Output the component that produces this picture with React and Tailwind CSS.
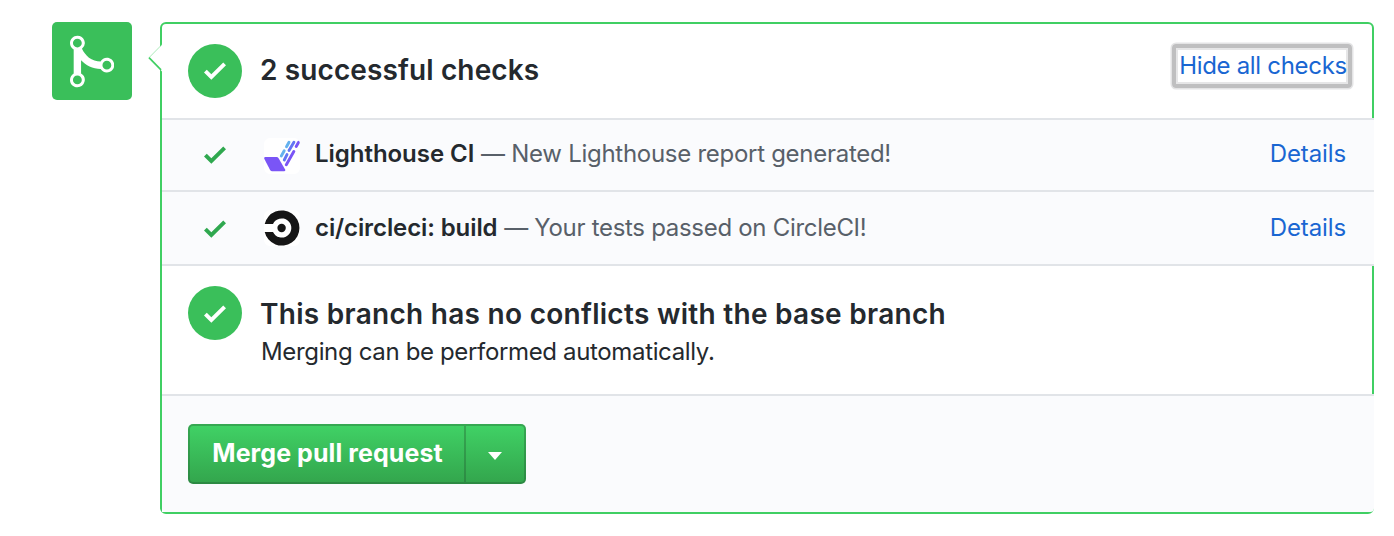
function CheckIcon({ className }) {
  return (
    <svg viewBox="0 0 12 16" className={`h-[29.33px] w-[22px] shrink-0 fill-current ${className}`}>
      <path d="M12 5l-8 8-4-4 1.5-1.5L4 10l6.5-6.5L12 5z" />
    </svg>
  );
}

function StatusCircle({ iconClass }) {
  return (
    <div className="flex size-[54px] shrink-0 items-center justify-center rounded-full bg-[#3abf5a] text-white">
      <CheckIcon className={iconClass} />
    </div>
  );
}

function MergeIcon() {
  return (
    <svg viewBox="0 0 12 16" className="h-[59px] w-[44.25px] fill-white">
      <path d="M10 7c-.73 0-1.38.41-1.73 1.02V8C7.22 7.98 6 7.64 5.14 6.98c-.75-.58-1.5-1.61-1.89-2.44A1.993 1.993 0 0 0 2 .99C.89.99 0 1.89 0 3a2 2 0 0 0 1 1.72v6.56c-.59.35-1 .99-1 1.72 0 1.11.89 2 2 2a1.993 1.993 0 0 0 1-3.72V7.67c.67.7 1.44 1.27 2.3 1.69.86.42 2.03.63 2.97.64v-.02c.36.61 1 1.02 1.73 1.02 1.11 0 2-.89 2-2 0-1.11-.89-2-2-2zm-6.8 6c0 .66-.55 1.2-1.2 1.2-.65 0-1.2-.55-1.2-1.2 0-.65.55-1.2 1.2-1.2.65 0 1.2.55 1.2 1.2zM2 4.2C1.34 4.2.8 3.65.8 3c0-.65.55-1.2 1.2-1.2.65 0 1.2.55 1.2 1.2 0 .65-.55 1.2-1.2 1.2zm8 6c-.66 0-1.2-.55-1.2-1.2 0-.65.55-1.2 1.2-1.2.65 0 1.2.55 1.2 1.2 0 .65-.55 1.2-1.2 1.2z" />
    </svg>
  );
}

function LighthouseLogo() {
  return (
    <svg viewBox="0 0 36 36" className="size-9 shrink-0 rounded-md bg-white">
      <path d="M1.5 19H12.5q1.4 0 2.1 1.2L21 31.2q1 2-1 2H8.2q-1.4 0-2.1-1.2L.4 21Q-.4 19 1.5 19z" fill="#7a55f6" />
      <g strokeWidth="2.9" strokeLinecap="round" fill="none">
        <path d="M25 4.3L22.5 8.8M20.2 12.8L17.3 18" stroke="#64b1ee" />
        <path d="M29.9 4.3L25 12.5M23 16.6L20.3 22" stroke="#6375f3" />
        <path d="M34.6 4.3L32.2 8.5M29.8 13.5L22.3 26.8" stroke="#7a55f6" />
      </g>
    </svg>
  );
}

function CircleLogo() {
  return (
    <svg viewBox="0 0 36 36" className="size-9 shrink-0 rounded-md bg-white">
      <path d="M.7 14A17.6 17.6 0 1 1 .7 22H9A9.6 9.6 0 1 0 9 14z" fill="#161616" />
      <circle cx="17.6" cy="18" r="4.2" fill="#161616" />
    </svg>
  );
}

function CheckRow({ logo, name, message, className }) {
  return (
    <div className={`-mr-0.5 flex items-center border-t-2 border-[#e1e4e8] bg-[#fafbfd] pr-7 pl-[42px] ${className}`}>
      <CheckIcon className="text-[#2fa84f]" />
      <div className="ml-[38px] flex">{logo}</div>
      <p className="-mt-[3px] ml-[15px] flex-1 whitespace-nowrap text-[24px] leading-9 text-[#586069]">
        {name} {message}
      </p>
      <a className="-mt-[3px] text-[24px] leading-9 tracking-[-0.12px] text-[#1966d2]">Details</a>
    </div>
  );
}

export default function App() {
  return (
    <main className="flex h-[536px] items-start bg-white pt-[22px] pr-5 pl-[52px] font-['Inter',sans-serif] text-[#24292e]">
      <div className="flex h-[78px] w-20 shrink-0 items-center justify-center rounded-[5px] bg-[#3abf5a]">
        <MergeIcon />
      </div>

      <section className="relative ml-7 flex h-[492px] flex-1 flex-col rounded-md border-2 border-[#40cf63]">
        <svg viewBox="0 0 14 28" className="absolute top-5 -left-[14px] h-7 w-[14px]">
          <path d="M14 .5L1 14L14 27.5V.5z" fill="white" />
          <path d="M13.5 1L1 13.7" stroke="#40cf63" strokeWidth=".45" fill="none" />
          <path d="M1 13.7L13 25.8" stroke="#40cf63" strokeWidth="1.7" fill="none" />
        </svg>

        <header className="flex h-[94px] shrink-0 items-start pt-5 pr-5 pl-[26px]">
          <StatusCircle iconClass="" />
          <h2 className="mt-[5px] ml-[18px] flex-1 text-[28px] leading-[42px] font-semibold tracking-[0.12px]">2 successful checks</h2>
          <button className="flex h-11 w-[180px] items-center justify-center rounded-[4px] border-4 border-[#bfbfc0] pl-0.5 text-[24px] tracking-[-0.31px] whitespace-nowrap text-[#1966d2] shadow-[0_0_0_1.5px_#e4e4e5,inset_0_0_0_2px_#e6e6e7]">
            Hide all checks
          </button>
        </header>

        <CheckRow
          className="h-[72px]"
          logo={<div className="mt-0.5"><LighthouseLogo /></div>}
          name={<strong className="font-semibold tracking-[-0.04px] text-[#24292e]">Lighthouse CI</strong>}
          message={<span className="tracking-[-0.28px]">— New Lighthouse report generated!</span>}
        />
        <CheckRow
          className="h-[74px] pt-0.5"
          logo={<div className="-mt-0.5"><CircleLogo /></div>}
          name={<strong className="font-semibold tracking-[-0.1px] text-[#24292e]">ci/circleci: build</strong>}
          message={<span className="tracking-[-0.3px]">— Your tests passed on CircleCI!</span>}
        />

        <div className="-mr-0.5 h-0.5 shrink-0 bg-[#e1e4e8]" />
        <div className="flex h-32 shrink-0 items-start pt-5 pl-[26px]">
          <StatusCircle iconClass="mt-0.5" />
          <div className="mt-[7px] ml-[18px] whitespace-nowrap">
            <h2 className="text-[28px] leading-[42px] font-semibold tracking-[0.28px]">
              This branch has no conflicts with the base branch
            </h2>
            <p className="-mt-[1px] ml-px text-[24px] leading-9 tracking-[-0.35px]">Merging can be performed automatically.</p>
          </div>
        </div>

        <footer className="-mr-0.5 flex flex-1 items-start rounded-br-[4px] border-t-2 border-[#e1e4e8] bg-[#fafbfd] pt-7 pl-[26px]">
          <div className="flex h-[60px] w-[338px] rounded-[5px] bg-linear-to-b from-[#36a852] to-[#2c8a43] p-0.5 text-white">
            <button className="flex w-[274px] items-center justify-center rounded-l-[3px] bg-linear-to-b from-[#40d165] to-[#33a64d] pl-px text-[25px] font-bold tracking-[0.08px] whitespace-nowrap">
              Merge pull request
            </button>
            <button className="ml-0.5 flex flex-1 items-center justify-center rounded-r-[3px] bg-linear-to-b from-[#40d165] to-[#33a64d] pt-[3px]">
              <svg viewBox="0 0 14 8" className="h-2 w-[14px] fill-white">
                <path d="M0 0h14L7 8z" />
              </svg>
            </button>
          </div>
        </footer>
      </section>
    </main>
  );
}
